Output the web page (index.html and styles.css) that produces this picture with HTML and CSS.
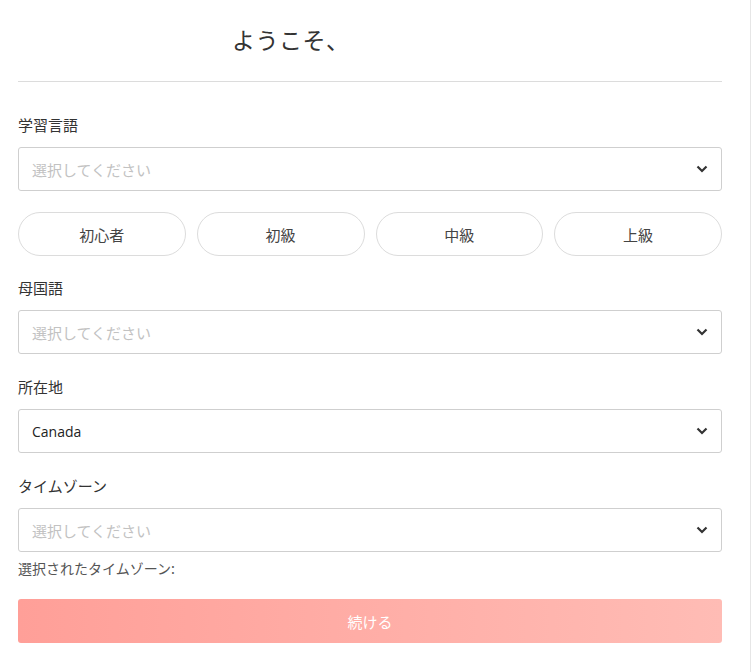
FILE: index.html
```html
<!DOCTYPE html>
<html lang="ja">
<head>
<meta charset="utf-8">
<link rel="stylesheet" href="styles.css">
</head>
<body>
<div class="page">
  <div class="header">
    <h1 class="title">ようこそ、</h1>
  </div>
  <form class="form">
    <div class="field">
      <label class="label">学習言語</label>
      <div class="select placeholder"><span>選択してください</span>
        <svg class="chev" width="12" height="8" viewBox="0 0 12 8"><path d="M1.5 1.5 L6 6 L10.5 1.5" fill="none" stroke="#333" stroke-width="2.2"/></svg>
      </div>
    </div>
    <div class="levels">
      <div class="pill">初心者</div>
      <div class="pill">初級</div>
      <div class="pill">中級</div>
      <div class="pill">上級</div>
    </div>
    <div class="field">
      <label class="label">母国語</label>
      <div class="select placeholder"><span>選択してください</span>
        <svg class="chev" width="12" height="8" viewBox="0 0 12 8"><path d="M1.5 1.5 L6 6 L10.5 1.5" fill="none" stroke="#333" stroke-width="2.2"/></svg>
      </div>
    </div>
    <div class="field">
      <label class="label">所在地</label>
      <div class="select"><span class="latin">Canada</span>
        <svg class="chev" width="12" height="8" viewBox="0 0 12 8"><path d="M1.5 1.5 L6 6 L10.5 1.5" fill="none" stroke="#333" stroke-width="2.2"/></svg>
      </div>
    </div>
    <div class="field">
      <label class="label">タイムゾーン</label>
      <div class="select placeholder"><span>選択してください</span>
        <svg class="chev" width="12" height="8" viewBox="0 0 12 8"><path d="M1.5 1.5 L6 6 L10.5 1.5" fill="none" stroke="#333" stroke-width="2.2"/></svg>
      </div>
      <div class="note">選択されたタイムゾーン:</div>
    </div>
    <button type="button" class="submit">続ける</button>
  </form>
</div>
</body>
</html>
```

FILE: styles.css
```css
* { box-sizing: border-box; }
html, body { margin: 0; padding: 0; background: #fff; }
body {
  font-family: "Noto Sans CJK JP", "Noto Sans", sans-serif;
  color: #333;
  width: 751px;
  height: 672px;
  overflow: hidden;
  border-right: 1px solid #e6e6e6;
}
.page { padding: 0 28px 0 18px; }
.header {
  height: 82px;
  border-bottom: 1px solid #dcdcdc;
  display: flex;
  align-items: flex-start;
}
.title {
  margin: 22px 0 0 214px;
  font-size: 23px;
  font-weight: 400;
  line-height: 34px;
  color: #333;
  letter-spacing: 0.5px;
}
.form { display: flex; flex-direction: column; padding-top: 32px; }
.field { display: flex; flex-direction: column; }
.label {
  font-size: 15px;
  line-height: 22px;
  color: #333;
  margin-bottom: 11px;
}
.select {
  height: 44px;
  border: 1px solid #cfcfcf;
  border-radius: 3px;
  display: flex;
  align-items: center;
  justify-content: space-between;
  padding: 0 13px 0 13px;
  font-size: 15px;
  color: #222;
}
.select.placeholder { color: #c2c2c2; }
.latin { font-family: "Open Sans", "Noto Sans", sans-serif; font-size: 14px; color: #222; }
.chev { display: block; }
.levels {
  display: grid;
  grid-template-columns: repeat(4, 1fr);
  gap: 11px;
  margin: 21px 0 21px;
}
.pill {
  height: 44px;
  border: 1px solid #dcdcdc;
  border-radius: 22px;
  display: flex;
  align-items: center;
  justify-content: center;
  font-size: 15px;
  color: #444;
}
.field + .field { margin-top: 22px; }
.levels + .field { margin-top: 0; }
.note {
  margin-top: 6px;
  font-size: 14px;
  line-height: 20px;
  color: #555;
}
.submit {
  margin-top: 21px;
  height: 44px;
  border: none;
  border-radius: 3px;
  background: linear-gradient(to right, #ff9f98, #ffbcb5);
  color: #fff;
  font-family: "Noto Sans CJK JP", sans-serif;
  font-size: 15px;
  width: 100%;
}
```
